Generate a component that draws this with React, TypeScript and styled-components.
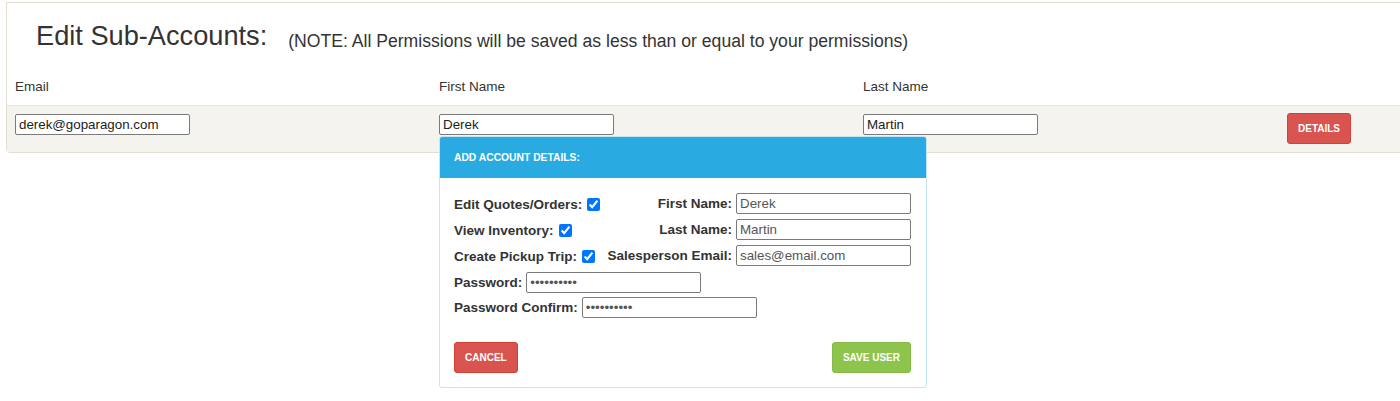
import styled, { createGlobalStyle } from 'styled-components';

const GlobalStyle = createGlobalStyle`
  body {
    margin: 0;
    background: #fff;
    color: #333;
    font-family: "Liberation Sans", Arial, sans-serif;
  }
`;

const Page = styled.div`
  height: 100vh;
  overflow: hidden;
  padding: 2px 0 0 6px;
  box-sizing: border-box;
`;

const Card = styled.section`
  width: 1700px;
  border: 1px solid #e4ded2;
  border-radius: 0 0 0 4px;
  background: #fff;
`;

const TitleBar = styled.div`
  display: flex;
  align-items: flex-end;
  padding: 17px 0 21px 29px;
`;

const Title = styled.h1`
  margin: 0;
  font-size: 27.2px;
  font-weight: normal;
  line-height: 31px;
  color: #333;
`;

const Note = styled.span`
  margin-left: 21px;
  font-size: 17.6px;
  line-height: 20px;
  color: #333;
`;

const Row = styled.div<{ $body?: boolean }>`
  display: grid;
  grid-template-columns: repeat(4, 424px);
  background: ${({ $body }) => ($body ? '#f5f3ee' : 'transparent')};
  border-top: ${({ $body }) => ($body ? '1px solid #e8e3d8' : 'none')};
`;

const HeadCell = styled.div`
  padding: 7px 8px 10px;
  font-size: 13.5px;
  line-height: 16px;
  color: #333;
`;

const Cell = styled.div`
  position: relative;
  padding: 8px 8px;
`;

const TextInput = styled.input<{ $muted?: boolean }>`
  box-sizing: border-box;
  width: 175px;
  height: 21px;
  margin: 0;
  padding: 1px 3px;
  border: 1px solid #7a7a7a;
  border-radius: 2px;
  background: #fff;
  font-family: "Liberation Sans", Arial, sans-serif;
  font-size: 13.33px;
  color: ${({ $muted }) => ($muted ? '#555' : '#222')};
  outline: none;
`;

const Button = styled.button<{ $tone: 'red' | 'green' }>`
  height: 31px;
  padding: 0 10px;
  border: 1px solid ${({ $tone }) => ($tone === 'red' ? '#d43f3a' : '#86b943')};
  border-radius: 3px;
  background: ${({ $tone }) => ($tone === 'red' ? '#d9534f' : '#8dc44c')};
  color: #fff;
  font-family: "Liberation Sans", Arial, sans-serif;
  font-size: 10px;
  font-weight: bold;
  text-transform: uppercase;
  cursor: pointer;
`;

const DetailsButton = styled(Button)`
  margin-top: -1px;
`;

const Popup = styled.div`
  position: absolute;
  top: 30px;
  left: 8px;
  z-index: 5;
  width: 488px;
  box-sizing: border-box;
  border: 1px solid #c3e6f4;
  border-radius: 3px;
  background: #fff;
  overflow: hidden;
`;

const PopupHeader = styled.div`
  height: 41px;
  padding: 0 14px;
  background: #29abe2;
  color: #fff;
  font-size: 10.3px;
  font-weight: bold;
  line-height: 42px;
  text-transform: uppercase;
`;

const PopupBody = styled.div`
  padding: 15px 15px 14px 14px;
`;

const Columns = styled.div`
  display: flex;
  justify-content: space-between;
`;

const Stack = styled.div<{ $offset?: number }>`
  display: flex;
  flex-direction: column;
  gap: 5px;
  padding-top: ${({ $offset }) => $offset ?? 0}px;
`;

const FieldRow = styled.label<{ $right?: boolean }>`
  display: flex;
  align-items: center;
  justify-content: ${({ $right }) => ($right ? 'flex-end' : 'flex-start')};
  gap: 4px;
  height: 21px;
  font-size: 13.5px;
  font-weight: bold;
  color: #333;
  white-space: nowrap;
`;

const Check = styled.input`
  width: 13px;
  height: 13px;
  margin: 0 0 0 1px;
  accent-color: #0075ff;
`;

const PasswordStack = styled(Stack)`
  margin-top: 5px;
  gap: 4px;
`;

const Actions = styled.div`
  display: flex;
  justify-content: space-between;
  margin-top: 24px;
`;

export default function App() {
  return (
    <>
      <GlobalStyle />
      <Page>
        <Card>
          <TitleBar>
            <Title>Edit Sub-Accounts:</Title>
            <Note>(NOTE: All Permissions will be saved as less than or equal to your permissions)</Note>
          </TitleBar>

          <Row>
            <HeadCell>Email</HeadCell>
            <HeadCell>First Name</HeadCell>
            <HeadCell>Last Name</HeadCell>
            <HeadCell />
          </Row>

          <Row $body>
            <Cell>
              <TextInput defaultValue="derek@goparagon.com" />
            </Cell>
            <Cell>
              <TextInput defaultValue="Derek" />
              <Popup>
                <PopupHeader>Add Account Details:</PopupHeader>
                <PopupBody>
                  <Columns>
                    <Stack $offset={1}>
                      <FieldRow>
                        Edit Quotes/Orders:
                        <Check type="checkbox" defaultChecked />
                      </FieldRow>
                      <FieldRow>
                        View Inventory:
                        <Check type="checkbox" defaultChecked />
                      </FieldRow>
                      <FieldRow>
                        Create Pickup Trip:
                        <Check type="checkbox" defaultChecked />
                      </FieldRow>
                    </Stack>
                    <Stack>
                      <FieldRow $right>
                        First Name:
                        <TextInput $muted defaultValue="Derek" />
                      </FieldRow>
                      <FieldRow $right>
                        Last Name:
                        <TextInput $muted defaultValue="Martin" />
                      </FieldRow>
                      <FieldRow $right>
                        Salesperson Email:
                        <TextInput $muted defaultValue="sales@email.com" />
                      </FieldRow>
                    </Stack>
                  </Columns>

                  <PasswordStack>
                    <FieldRow>
                      Password:
                      <TextInput $muted type="password" defaultValue="password12" />
                    </FieldRow>
                    <FieldRow>
                      Password Confirm:
                      <TextInput $muted type="password" defaultValue="password12" />
                    </FieldRow>
                  </PasswordStack>

                  <Actions>
                    <Button $tone="red">Cancel</Button>
                    <Button $tone="green">Save User</Button>
                  </Actions>
                </PopupBody>
              </Popup>
            </Cell>
            <Cell>
              <TextInput defaultValue="Martin" />
            </Cell>
            <Cell>
              <DetailsButton $tone="red">Details</DetailsButton>
            </Cell>
          </Row>
        </Card>
      </Page>
    </>
  );
}
